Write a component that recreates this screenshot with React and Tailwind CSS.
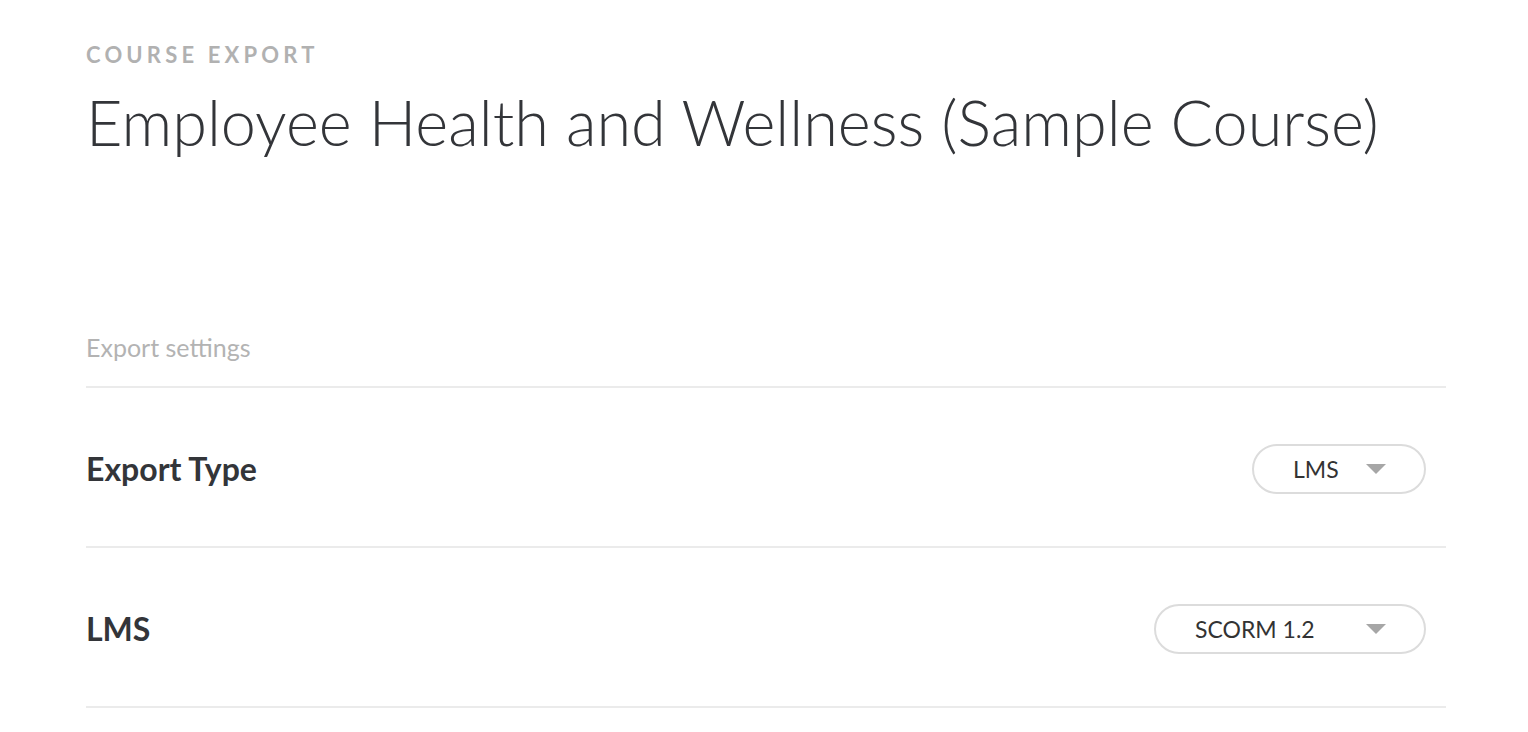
export default function App() {
  const Caret = () => (
    <svg width="20" height="10" viewBox="0 0 20 10" className="shrink-0">
      <path d="M0 0 L20 0 L10 10 Z" fill="#a6a6a6" />
    </svg>
  );
  const Select = ({ value, width }) => (
    <div
      className={`flex items-center h-[50px] rounded-full border-2 border-[#dcdcdc] pl-[39px] pr-[38px] ${width}`}
    >
      <span className="text-[23px] text-[#333] leading-none">{value}</span>
      <span className="ml-auto flex items-center">
        <Caret />
      </span>
    </div>
  );
  return (
    <div
      className="min-h-[732px] bg-white pl-[86px] pr-[82px] pt-[40px]"
      style={{ fontFamily: "Lato, 'Open Sans', sans-serif" }}
    >
      <div className="text-[22px] font-bold tracking-[0.19em] text-[#b1b1b1] leading-[30px] whitespace-nowrap">
        COURSE EXPORT
      </div>
      <h1 className="mt-[12px] text-[63px] font-light text-[#333539] leading-[80px] whitespace-nowrap">
        Employee Health and Wellness (Sample Course)
      </h1>
      <div className="mt-[170px] text-[25px] text-[#b3b3b3] leading-[30px]">Export settings</div>
      <div className="mt-[24px] border-t-2 border-[#ebebeb]">
        <div className="flex items-center justify-between h-[160px] pt-[4px] border-b-2 border-[#ebebeb] pr-[20px]">
          <span className="text-[32px] font-bold text-[#333539]">Export Type</span>
          <Select value="LMS" width="w-[174px]" />
        </div>
        <div className="flex items-center justify-between h-[160px] pt-[4px] border-b-2 border-[#ebebeb] pr-[20px]">
          <span className="text-[32px] font-bold text-[#333539]">LMS</span>
          <Select value="SCORM 1.2" width="w-[272px]" />
        </div>
      </div>
    </div>
  );
}
